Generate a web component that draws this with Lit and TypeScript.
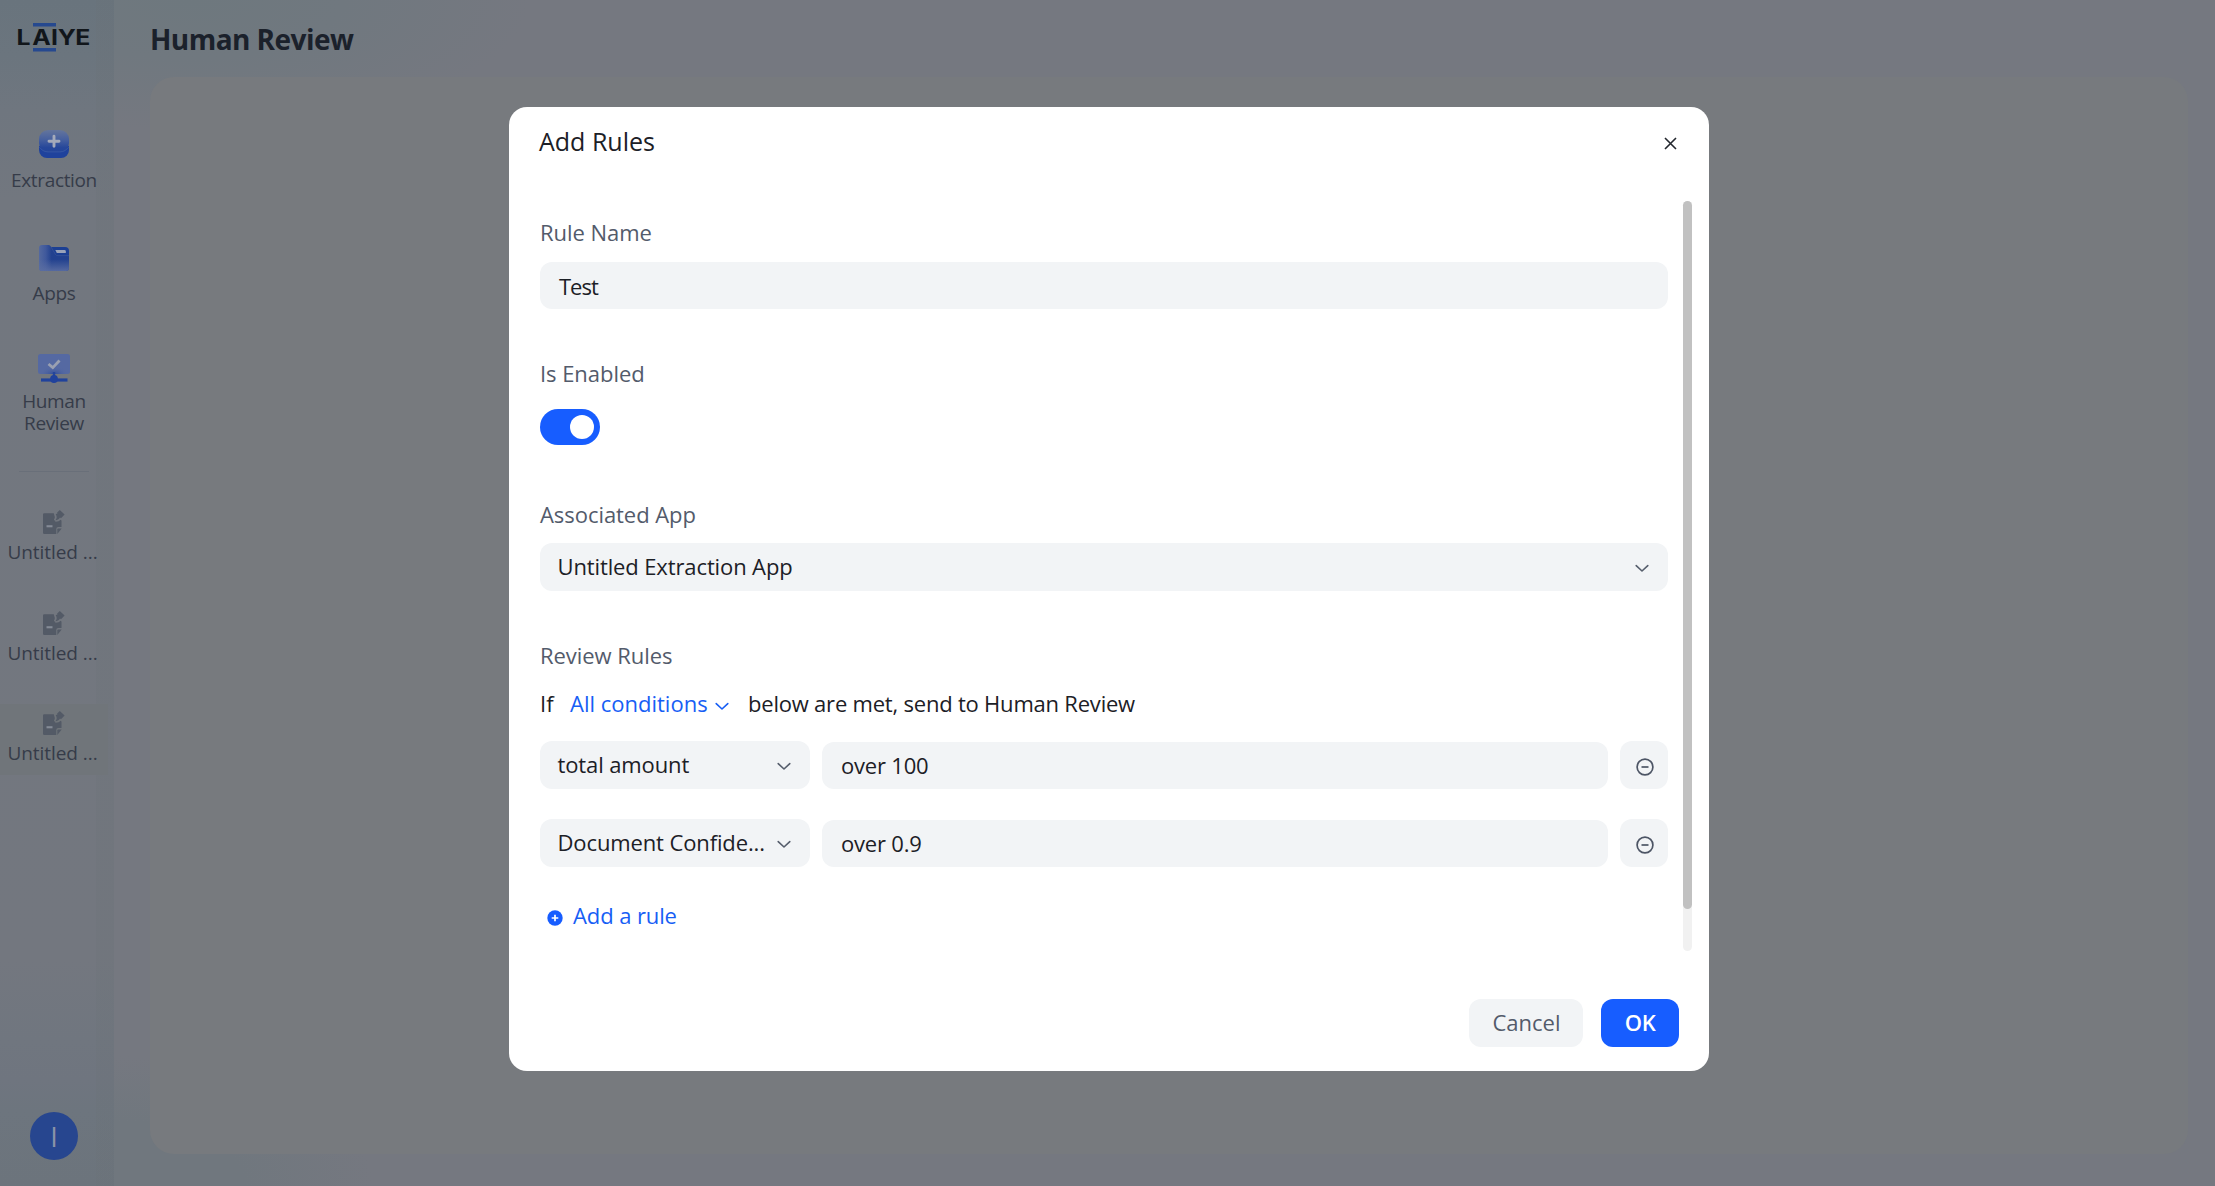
import { LitElement, html, css, svg } from 'lit';
import { customElement, property, state } from 'lit/decorators.js';

const chevron = html`<svg class="chev" width="14" height="9" viewBox="0 0 14 9" fill="none" stroke="currentColor" stroke-width="1.6" stroke-linecap="round" stroke-linejoin="round"><path d="M1.2 1.6 7 7l5.8-5.4"/></svg>`;

const extractionIcon = svg`<svg width="30" height="28" viewBox="0 0 30 28">
  <defs><linearGradient id="ex" x1="0" y1="0" x2="0" y2="1">
    <stop offset="0" stop-color="#64759c"/><stop offset=".45" stop-color="#455f9f"/><stop offset=".8" stop-color="#26479a"/><stop offset="1" stop-color="#24459a"/>
  </linearGradient></defs>
  <path d="M0 16h30v4a8 8 0 0 1-8 8H8a8 8 0 0 1-8-8z" fill="#1f429c"/>
  <rect width="30" height="22" rx="9" fill="url(#ex)"/>
  <path d="M.3 17.2C2.6 19.6 4.6 21.9 9 21.9h12c4.4 0 6.4-2.3 8.7-4.7" fill="none" stroke="#3f5ea8" stroke-width=".7"/>
  <path d="M15 6.2v10M10 11.2h10" stroke="#a4aaba" stroke-width="2.9" stroke-linecap="round"/>
</svg>`;

const appsIcon = svg`<svg width="30" height="27" viewBox="0 0 30 27">
  <defs>
    <linearGradient id="apx" x1="0" y1="0" x2="1" y2="0"><stop offset="0" stop-color="#54699f"/><stop offset=".22" stop-color="#40599c"/><stop offset=".42" stop-color="#22418f"/><stop offset="1" stop-color="#22418f"/></linearGradient>
    <linearGradient id="apy" x1="0" y1="0" x2="0" y2="1"><stop offset=".55" stop-color="#5b6ea2" stop-opacity="0"/><stop offset="1" stop-color="#5b6ea2" stop-opacity=".9"/></linearGradient>
  </defs>
  <path d="M8 3h18a4 4 0 0 1 4 4v8H8z" fill="#1c3f93"/>
  <path d="M3 1h6c1.500 0 2.300.6 3 1.700l4.200 7.300c.7 1.200 1.400 1.600 2.800 1.600h11V24a3 3 0 0 1-3 3H3a3 3 0 0 1-3-3V4a3 3 0 0 1 3-3z" fill="url(#apx)"/>
  <path d="M3 1h6c1.500 0 2.300.6 3 1.700l4.200 7.300c.7 1.200 1.400 1.600 2.800 1.600h11V24a3 3 0 0 1-3 3H3a3 3 0 0 1-3-3V4a3 3 0 0 1 3-3z" fill="url(#apy)"/>
  <path d="M12 2.7l4.200 7.300c.7 1.200 1.400 1.600 2.800 1.600h11" fill="none" stroke="#3c5798" stroke-width=".6"/>
  <path d="M16.300 6h9.200a1.300 1.300 0 0 1 1.300 1.300V9h-9z" fill="#9aa3b9"/>
</svg>`;

const reviewIcon = svg`<svg width="32" height="29" viewBox="0 0 32 29">
  <defs><radialGradient id="rv" cx=".5" cy="1.05" r=".45"><stop offset="0" stop-color="#29489a"/><stop offset="1" stop-color="#5569a2" stop-opacity="0"/></radialGradient></defs>
  <rect width="32" height="20" rx="2.500" fill="#5569a2"/>
  <rect width="32" height="20" rx="2.500" fill="url(#rv)"/>
  <path d="M10.500 10l4.300 3.600L21.500 6.500" fill="none" stroke="#9aa0b1" stroke-width="2.800"/>
  <path d="M16 18v7" stroke="#24459b" stroke-width="2.400"/>
  <path d="M3 26h26.500" stroke="#20429c" stroke-width="3.200"/>
  <circle cx="16" cy="25" r="3.900" fill="#20429c"/>
</svg>`;

const docIcon = svg`<svg width="22" height="24" viewBox="0 0 22 24">
  <path d="M1.200 3.200H10.800L11.400 5.500C12.200 7.300 11.800 8.600 10.900 9.600L12.600 11.800C15 11.700 16.400 11 17.600 9.800L18.500 10.500V17H15.200A1.900 1.900 0 0 0 13.300 18.900V24H1.200A1.200 1.200 0 0 1 0 22.800V4.400A1.200 1.200 0 0 1 1.200 3.200z" fill="#535a66"/>
  <path d="M3.500 15.200h6v2.100h-6z" fill="#858b96"/>
  <path d="M14.300 24v-4.600a1 1 0 0 1 1-1H18.700z" fill="#535a66"/>
  <path d="M16.800 0L21.600 4.400 18 8.300 17 7.400C15.900 9.200 14.200 10.100 12.400 10.200 14.200 8.200 14 6 12.700 4.200L14.600 3.300 14 2.700z" fill="#535a66"/>
</svg>`;

@customElement('side-nav')
export class SideNav extends LitElement {
  static styles = css`
    :host { display: block; flex: none; width: 114px; height: 100%; }
    .side {
      box-sizing: border-box; width: 114px; height: 100%; display: flex; flex-direction: column; align-items: flex-start;
      background: linear-gradient(90deg, transparent 96px, rgba(106,113,118,.22) 96px),
        linear-gradient(180deg, #69747d 0, #6b757e 55px, #6f767f 110px, #72777f 200px, #73777f 960px, #70767f 1040px, #6f757f 1080px, #6d757e 1110px, #6c747c 100%);
    }
    .col { width: 108px; display: flex; flex-direction: column; align-items: center; }
    .logo { display: block; height: 60px; width: 108px; }
    .logo text { font: 700 21px Inter, sans-serif; fill: #11161b; }
    .item {
      width: 108px; box-sizing: border-box; display: flex; flex-direction: column; align-items: center;
      font-size: 19px; line-height: 22px; letter-spacing: -.35px; color: #363c49; text-align: center;
    }
    .item svg { display: block; flex: none; }
    .extraction { padding-top: 70px; height: 184px; gap: 11px; }
    .apps { height: 110px; gap: 11px; }
    .review { height: 117px; gap: 7px; }
    .line { width: 70px; height: 1px; background: #696f79; }
    .doc { height: 71.500px; padding-top: 7.500px; gap: 7px; }
    .docs { display: flex; flex-direction: column; gap: 29px; padding-top: 30.500px; }
    .active { background: #70757a; }
    .label { white-space: nowrap; letter-spacing: -.05px; margin-left: -3px; }
    .avatar {
      margin: auto 0 26px; width: 48px; height: 48px; border-radius: 50%; background: #27468f; color: #8a92a7;
      display: flex; align-items: center; justify-content: center; font-size: 27px;
    }
    .grow { flex: 1; }
  `;
  render() {
    return html`<nav class="side">
      <svg class="logo" viewBox="0 0 108 60">
        <rect x="33" y="23" width="23" height="3.500" fill="#26498f"/>
        <g transform="scale(1.18 1)"><text y="45" x="14 27.300 43.300 49 63.800">LAIYE</text></g>
        <rect x="33" y="48" width="23" height="3.500" fill="#26498f"/>
      </svg>
      <div class="item extraction">${extractionIcon}<span>Extraction</span></div>
      <div class="item apps">${appsIcon}<span>Apps</span></div>
      <div class="item review">${reviewIcon}<span>Human<br>Review</span></div>
      <div class="col"><div class="line"></div></div>
      <div class="docs">
        ${[false, false, true].map(a => html`<div class="item doc ${a ? 'active' : ''}">${docIcon}<span class="label">Untitled ...</span></div>`)}
      </div>
      <div class="col grow"><div class="avatar">I</div></div>
    </nav>`;
  }
}

@customElement('rule-row')
export class RuleRow extends LitElement {
  @property() field = '';
  @property() value = '';
  static styles = css`
    :host { display: block; }
    .row { display: flex; align-items: flex-end; height: 48px; }
    .sel, .inp, .del { box-sizing: border-box; background: #f2f4f6; border-radius: 12px; display: flex; align-items: center; }
    .sel { width: 270px; height: 48px; padding: 0 19px 2px 17.500px; justify-content: space-between; margin-right: 12px; }
    .sel .t { letter-spacing: -.12px; }
    .sel svg { color: #565e6c; margin-top: 5px; }
    .inp { flex: 1; height: 47px; padding: 0 0 1px 19px; margin-right: 12px; letter-spacing: -.2px; }
    .del { width: 48px; height: 48px; justify-content: center; padding: 3px 0 0 1px; }
    .t { white-space: nowrap; }
  `;
  render() {
    return html`<div class="row">
      <div class="sel"><span class="t">${this.field}</span>${chevron}</div>
      <div class="inp"><span class="t">${this.value}</span></div>
      <div class="del"><svg width="20" height="20" viewBox="0 0 20 20" fill="none" stroke="#4d5565" stroke-width="1.700"><circle cx="10" cy="10" r="7.900"/><path d="M6.500 10h7"/></svg></div>
    </div>`;
  }
}

@customElement('rules-dialog')
export class RulesDialog extends LitElement {
  @state() rules = [
    { field: 'total amount', value: 'over 100' },
    { field: 'Document Confide...', value: 'over 0.9' },
  ];
  static styles = css`
    :host { display: block; width: 1200px; height: 964px; }
    .dialog { width: 1200px; height: 964px; box-sizing: border-box; background: #fff; border-radius: 18px; display: flex; flex-direction: column; color: #1c2026; }
    .head { height: 94px; box-sizing: border-box; padding: 19px 32px 0 30px; display: flex; justify-content: space-between; align-items: flex-start; }
    .title { font-size: 25px; line-height: 31px; }
    .close { margin-top: 10.500px; }
    .body { height: 750px; display: flex; padding-left: 31px; gap: 15px; }
    .form { width: 1128px; box-sizing: border-box; padding-top: 15.500px; }
    .field { height: 141px; }
    .label { color: #535b6b; line-height: 30px; letter-spacing: -.05px; }
    .box { box-sizing: border-box; background: #f2f4f6; border-radius: 12px; display: flex; align-items: center; }
    .input { height: 47px; margin-top: 15.500px; padding: 0 0 0 19px; letter-spacing: -1px; }
    .select { height: 48px; margin-top: 14.500px; padding: 0 19px 2px 17.500px; justify-content: space-between; letter-spacing: -.12px; }
    .select svg { color: #565e6c; margin-top: 5px; }
    .toggle { width: 60px; height: 36px; border-radius: 18px; background: #175dff; margin-top: 21.500px; display: flex; align-items: center; justify-content: flex-end; padding-right: 6px; box-sizing: border-box; }
    .knob { width: 24px; height: 24px; border-radius: 50%; background: #fff; }
    .cond { display: flex; line-height: 30px; margin: 18.500px 0 23px; white-space: nowrap; }
    .if { width: 30px; }
    .link { width: 178px; color: #175ef5; display: flex; align-items: center; gap: 7.500px; }
    .link svg { margin-top: 7px; }
    .rest { letter-spacing: -.210px; }
    .rules { display: flex; flex-direction: column; gap: 30px; }
    .add { display: flex; align-items: center; gap: 10px; color: #175ef5; line-height: 30px; margin-top: 33px; padding-left: 7px; letter-spacing: -.1px; }
    .add svg { margin-top: 6px; }
    .track { width: 9px; height: 750px; border-radius: 4.500px; background: #f1f1f1; }
    .thumb { height: 708px; border-radius: 4.500px; background: #c1c1c1; }
    .foot { flex: 1; display: flex; justify-content: flex-end; align-items: flex-start; gap: 18px; padding: 48px 30px 0 0; }
    .btn { height: 48px; border-radius: 12px; display: flex; align-items: center; justify-content: center; box-sizing: border-box; padding-bottom: 2px; }
    .cancel { width: 114px; background: #f2f4f6; color: #535b6b; padding-left: 1px; }
    .ok { width: 78px; background: #175dff; color: #fff; font-weight: 600; letter-spacing: -.4px; }
  `;
  render() {
    return html`<section class="dialog">
      <header class="head">
        <div class="title">Add Rules</div>
        <svg class="close" width="13" height="13" viewBox="0 0 13 13" stroke="#23272e" stroke-width="1.600"><path d="M1 1l11 11M12 1L1 12"/></svg>
      </header>
      <div class="body">
        <div class="form">
          <div class="field"><div class="label">Rule Name</div><div class="box input">Test</div></div>
          <div class="field"><div class="label">Is Enabled</div><div class="toggle"><div class="knob"></div></div></div>
          <div class="field"><div class="label">Associated App</div><div class="box select"><span>Untitled Extraction App</span>${chevron}</div></div>
          <div class="label">Review Rules</div>
          <div class="cond"><span class="if">If</span><span class="link"><span>All conditions</span>${chevron}</span><span class="rest">below are met, send to Human Review</span></div>
          <div class="rules">${this.rules.map(r => html`<rule-row .field=${r.field} .value=${r.value}></rule-row>`)}</div>
          <div class="add"><svg width="16" height="16" viewBox="0 0 16 16"><circle cx="8" cy="8" r="7.700" fill="#175dff"/><path d="M8 4.700v6.600M4.700 8h6.600" stroke="#fff" stroke-width="1.700"/></svg><span>Add a rule</span></div>
        </div>
        <div class="track"><div class="thumb"></div></div>
      </div>
      <footer class="foot"><div class="btn cancel">Cancel</div><div class="btn ok">OK</div></footer>
    </section>`;
  }
}

@customElement('app-root')
export class AppRoot extends LitElement {
  static styles = css`
    :host { display: block; font-family: "Open Sans", "Noto Sans", sans-serif; font-size: 22px; }
    .page {
      position: relative; width: 2215px; height: 1186px; display: flex; overflow: hidden;
      background: radial-gradient(ellipse 340px 130px at 190px 0, #6e787e 0, #70787f 45%, rgba(117,120,128,0) 100%),
        radial-gradient(ellipse 260px 130px at 114px 1186px, #70777e 0, #70777e 50%, rgba(117,120,128,0) 100%), #757880;
    }
    .main { flex: 1; display: flex; flex-direction: column; padding: 0 27px 32px 36px; }
    .heading { height: 77px; box-sizing: border-box; padding-top: 19px; font-size: 28px; font-weight: 700; letter-spacing: -.55px; line-height: 40px; color: #1b212b; }
    .card { flex: 1; border-radius: 24px; background: #777a7e; }
    .overlay { position: absolute; top: 107px; left: 509px; }
  `;
  render() {
    return html`<div class="page">
      <side-nav></side-nav>
      <main class="main"><div class="heading">Human Review</div><div class="card"></div></main>
      <rules-dialog class="overlay"></rules-dialog>
    </div>`;
  }
}
